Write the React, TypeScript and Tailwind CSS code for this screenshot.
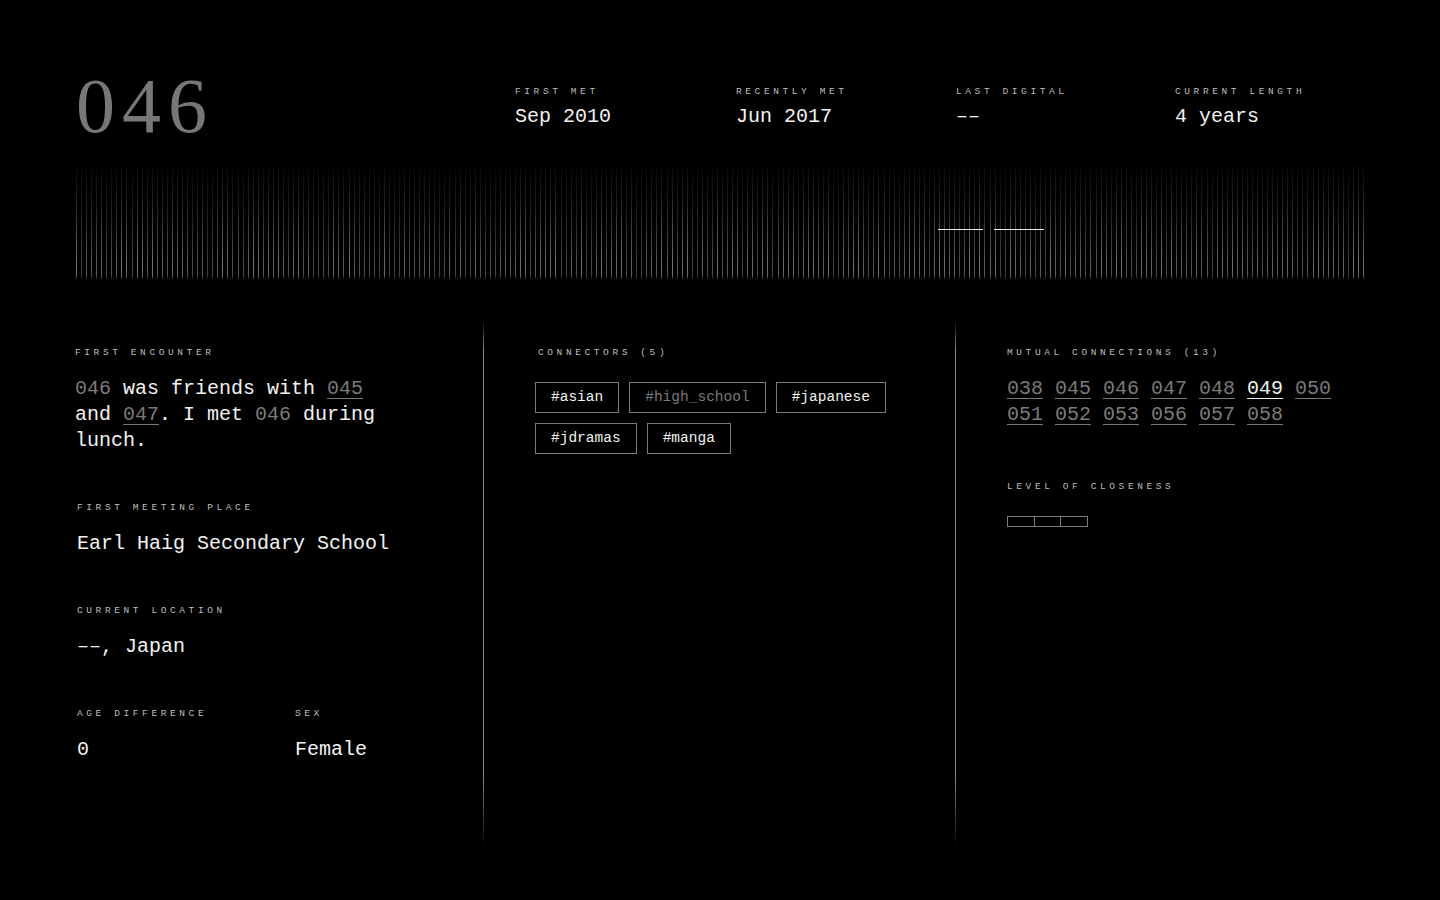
import { FC } from 'react'

const mono = { fontFamily: '"Liberation Mono", "DejaVu Sans Mono", monospace' }
const serif = { fontFamily: '"Liberation Serif", "DejaVu Serif", serif' }

const stats = [
  { label: 'First met', value: 'Sep 2010' },
  { label: 'Recently met', value: 'Jun 2017' },
  { label: 'Last digital', value: '––' },
  { label: 'Current length', value: '4 years' },
]

const tags = [
  { name: '#asian', dim: false },
  { name: '#high_school', dim: true },
  { name: '#japanese', dim: false },
  { name: '#jdramas', dim: false },
  { name: '#manga', dim: false },
]

const mutuals = ['038', '045', '046', '047', '048', '049', '050', '051', '052', '053', '056', '057', '058']

// pseudo random brightness per line, stable between renders
const rand = (i: number) => {
  const s = Math.sin(i * 12.9898) * 43758.5453
  return s - Math.floor(s)
}

const lines = Array.from({ length: 256 }, (_, i) => ({
  x: Math.round((i * 1287) / 255),
  o: 0.55 + 0.45 * rand(i + 1),
}))

const Label: FC<{ children: string; className?: string }> = ({ children, className = '' }) => (
  <div className={`text-[9.5px] leading-[12px] uppercase tracking-[3.6px] text-[#bdbdbd] ${className}`}>
    {children}
  </div>
)

const Timeline: FC = () => (
  <svg width={1288} height={114} className="block">
    <defs>
      <linearGradient id="fade" x1="0" y1="0" x2="0" y2="1">
        <stop offset="0%" stopColor="#c0c0c0" stopOpacity={0.04} />
        <stop offset="35%" stopColor="#c0c0c0" stopOpacity={0.22} />
        <stop offset="88%" stopColor="#c0c0c0" stopOpacity={0.62} />
        <stop offset="97%" stopColor="#c0c0c0" stopOpacity={0.55} />
        <stop offset="100%" stopColor="#c0c0c0" stopOpacity={0.2} />
      </linearGradient>
    </defs>
    {lines.map((l, i) => (
      <rect key={i} x={l.x} y={0} width={1} height={114} fill="url(#fade)" opacity={l.o} />
    ))}
    <rect x={862} y={64} width={45} height={1} fill="#f2f2f2" />
    <rect x={918} y={64} width={50} height={1} fill="#f2f2f2" />
  </svg>
)

const Divider: FC = () => (
  <div className="w-px self-stretch bg-[linear-gradient(to_bottom,transparent,#8a8a8a_6%,#8a8a8a_86%,transparent)]" />
)

const App: FC = () => {
  return (
    <div className="min-h-screen w-full bg-black text-[#f2f2f2] px-[76px] pt-[66px]" style={mono}>
      {/* Header */}
      <div className="grid grid-cols-[439px_221px_220px_219px_1fr] h-[80px]">
        <div className="text-[78px] leading-[80px] tracking-[7px] text-[#777777]" style={serif}>
          046
        </div>
        {stats.map(s => (
          <div key={s.label} className="pt-[20px]">
            <Label>{s.label}</Label>
            <div className="mt-[6px] text-[20px] leading-[26px]">{s.value}</div>
          </div>
        ))}
      </div>

      {/* Timeline */}
      <div className="mt-[19px]">
        <Timeline />
      </div>

      {/* Details */}
      <div className="mt-[40px] flex h-[530px]">
        <div className="w-[407px] pt-[28px]">
          <div className="-ml-px">
            <Label>First encounter</Label>
            <p className="mt-[17px] w-[310px] text-[20px] leading-[26px]">
              <span className="text-[#7a7a7a]">046</span> was friends with{' '}
              <span className="text-[#7a7a7a] underline decoration-1 underline-offset-[4px]">045</span> and{' '}
              <span className="text-[#7a7a7a] underline decoration-1 underline-offset-[4px]">047</span>. I met{' '}
              <span className="text-[#7a7a7a]">046</span> during lunch.
            </p>
          </div>

          <div className="ml-px mt-[48px]">
            <Label>First meeting place</Label>
            <div className="mt-[17px] text-[20px] leading-[26px]">Earl Haig Secondary School</div>
          </div>

          <div className="ml-px mt-[48px]">
            <Label>Current location</Label>
            <div className="mt-[17px] text-[20px] leading-[26px]">––, Japan</div>
          </div>

          <div className="ml-px mt-[48px] grid grid-cols-[218px_1fr]">
            <div>
              <Label>Age difference</Label>
              <div className="mt-[17px] text-[20px] leading-[26px]">0</div>
            </div>
            <div>
              <Label>Sex</Label>
              <div className="mt-[17px] text-[20px] leading-[26px]">Female</div>
            </div>
          </div>
        </div>

        <Divider />

        <div className="w-[471px] pl-[51px] pt-[28px]">
          <Label className="ml-[3px]">Connectors (5)</Label>
          <div className="mt-[23px] flex flex-wrap gap-[10px] w-[380px]">
            {tags.map(t => (
              <div
                key={t.name}
                className={`h-[31px] flex items-center border border-[#7a7a7a] px-[15px] text-[14.5px] ${
                  t.dim ? 'text-[#7a7a7a]' : 'text-[#f2f2f2]'
                }`}
              >
                {t.name}
              </div>
            ))}
          </div>
        </div>

        <Divider />

        <div className="flex-1 pl-[51px] pt-[28px]">
          <Label>Mutual connections (13)</Label>
          <div className="mt-[17px] flex flex-wrap gap-x-[12px] text-[20px] leading-[26px]">
            {mutuals.map(m => (
              <span
                key={m}
                className={`underline decoration-1 underline-offset-[4px] ${
                  m === '049' ? 'text-[#f2f2f2]' : 'text-[#7a7a7a]'
                }`}
              >
                {m}
              </span>
            ))}
          </div>

          <Label className="mt-[53px]">Level of closeness</Label>
          <div className="mt-[23px] flex w-[81px] h-[11px] border border-[#7a7a7a]">
            <div className="flex-1" />
            <div className="flex-1 border-l border-[#7a7a7a]" />
            <div className="flex-1 border-l border-[#7a7a7a]" />
          </div>
        </div>
      </div>
    </div>
  )
}

export default App
